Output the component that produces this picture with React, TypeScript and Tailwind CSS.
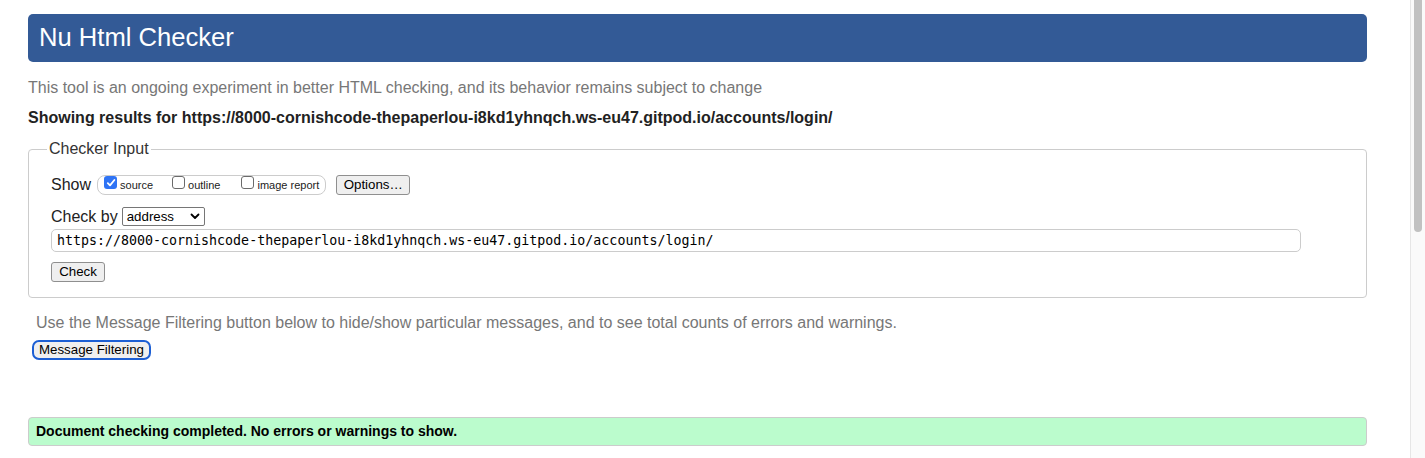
import React from 'react';

const url = 'https://8000-cornishcode-thepaperlou-i8kd1yhnqch.ws-eu47.gitpod.io/accounts/login/';

function Box({ checked, className = '' }: { checked?: boolean; className?: string }) {
  if (checked) {
    return (
      <span className={`flex w-[13px] h-[13px] rounded-[3px] bg-[#2f74f5] items-center justify-center shrink-0 ${className}`}>
        <svg width="10" height="10" viewBox="0 0 10 10">
          <path d="M1.8 5.2 L4 7.4 L8.4 2" fill="none" stroke="#fff" strokeWidth="1.8" strokeLinecap="round" strokeLinejoin="round" />
        </svg>
      </span>
    );
  }
  return <span className={`block w-[13px] h-[13px] rounded-[3px] border border-[#6b6b6b] bg-white shrink-0 ${className}`} />;
}

function Button({ children, className = '' }: { children: React.ReactNode; className?: string }) {
  return (
    <span
      className={`inline-flex items-center justify-center h-[20px] border border-[#8f8f8f] rounded-[3px] bg-[#efefef] text-[13.3px] text-black ${className}`}
    >
      {children}
    </span>
  );
}

function App() {
  return (
    <div className="flex h-[458px] overflow-hidden bg-white font-['Liberation_Sans',Arial,sans-serif]">
      <div className="flex-1 pl-[28px] pt-[14px]">
        <div className="w-[1339px]">
          <header className="h-[48px] rounded-[5px] bg-[#335a96] px-[11px] flex items-center">
            <h1 className="text-[25.6px] text-white leading-none">Nu Html Checker</h1>
          </header>

          <p className="mt-[17px] text-[16px] leading-[18px] text-[#777]">
            This tool is an ongoing experiment in better HTML checking, and its behavior remains subject to change
          </p>
          <p className="mt-[12px] text-[16px] leading-[18px] font-bold text-[#222]">
            Showing results for {url}
          </p>

          <fieldset className="mt-[13px] border border-[#ccc] rounded-[4px] px-[22px] pb-[15px]">
            <legend className="-ml-[4px] px-[2px] text-[16px] leading-[18px] text-[#333]">Checker Input</legend>

            <div className="mt-[17px] flex items-center h-[20px]">
              <span className="text-[16px] text-[#222] mr-[6px]">Show</span>
              <div className="flex items-start h-[20px] border border-[#ccc] rounded-[8px] pl-[6px] pr-[6px]">
                <Box checked />
                <span className="ml-[3px] mt-[3px] text-[11px] leading-[13px] text-[#222]">source</span>
                <Box className="ml-[19px]" />
                <span className="ml-[3px] mt-[3px] text-[11px] leading-[13px] text-[#222]">outline</span>
                <Box className="ml-[21px]" />
                <span className="ml-[3px] mt-[3px] text-[11px] leading-[13px] text-[#222]">image report</span>
              </div>
              <Button className="ml-[10px] w-[74px]">Options…</Button>
            </div>

            <div className="mt-[12px] flex items-center h-[19px]">
              <span className="text-[16px] text-[#222] mr-[4px]">Check by</span>
              <span className="w-[83px] h-[19px] border border-[#767676] rounded-[2px] bg-white flex items-center justify-between pl-[4px] pr-[4px] text-[13.3px] text-black">
                address
                <svg width="10" height="7" viewBox="0 0 10 7">
                  <path d="M1.5 1.5 L5 5 L8.5 1.5" fill="none" stroke="#000" strokeWidth="1.8" strokeLinecap="round" strokeLinejoin="round" />
                </svg>
              </span>
            </div>

            <div className="mt-[3px] w-[1250px] h-[23px] border border-[#ccc] rounded-[5px] bg-white flex items-center pl-[5px] font-['DejaVu_Sans_Mono',monospace] text-[13.3px] text-black">
              {url}
            </div>

            <div className="mt-[10px] flex">
              <Button className="w-[54px]">Check</Button>
            </div>
          </fieldset>

          <p className="mt-[16px] pl-[8px] text-[16px] leading-[18px] text-[#777]">
            Use the Message Filtering button below to hide/show particular messages, and to see total counts of errors and warnings.
          </p>
          <div className="mt-[8px] pl-[4px] flex">
            <span className="inline-flex items-center h-[20px] px-[5px] border-2 border-[#1c5fd4] rounded-[7px] bg-[#efefef] text-[13.3px] text-black">
              Message Filtering
            </span>
          </div>

          <div className="mt-[57px] h-[29px] border border-[#ccc] rounded-[4px] bg-[#bbfccd] flex items-center pl-[7px] text-[14px] font-bold text-black">
            Document checking completed. No errors or warnings to show.
          </div>
        </div>
      </div>

      <div className="w-[15px] h-full border-l border-[#e6e6e6] bg-[#fafafa] flex justify-center">
        <div className="w-[8px] h-[232px] rounded-b-[4px] bg-[#c1c1c1]" />
      </div>
    </div>
  );
}

export default App;
